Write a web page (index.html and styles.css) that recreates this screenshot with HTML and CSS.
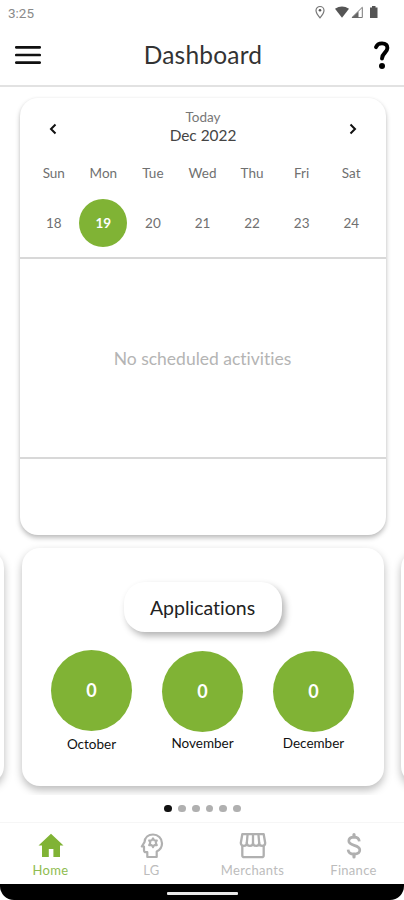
FILE: index.html
```html
<!DOCTYPE html>
<html lang="en">
<head>
<meta charset="utf-8">
<title>Dashboard</title>
<link rel="stylesheet" href="styles.css">
</head>
<body>
<div class="screen">
  <div class="status">
    <span class="clock">3:25</span>
    <svg class="status-icons" width="68" height="16" viewBox="0 0 68 16">
      <path d="M6 12.800C3.400 9.800 2 8 2 5.500a4 4 0 0 1 8 0C10 8 8.600 9.800 6 12.800z" fill="none" stroke="#777" stroke-width="1.200"/>
      <circle cx="6" cy="5.300" r="1.300" fill="#555"/>
      <path d="M21 3.700Q28-.9 35 3.700L28 12.800z" fill="#555"/>
      <path d="M48.300 2.300V12.500H38z" fill="none" stroke="#777" stroke-width="1"/>
      <path d="M44.500 6.500V13H37.500z" fill="#666"/>
      <path d="M56 2.500h2V1h3.500v1.500h2V13H56z" fill="#555"/>
    </svg>
  </div>
  <header class="appbar">
    <svg class="menu" width="26" height="20" viewBox="0 0 26 20"><path d="M1.300 2.300h23.400M1.300 10h23.400M1.300 17.600h23.400" stroke="#111" stroke-width="2.700" stroke-linecap="round"/></svg>
    <h1>Dashboard</h1>
    <svg class="help" width="18" height="30" viewBox="0 0 18 30"><path d="M3 7.200C4 4.300 6 3.400 9 3.400c3.400 0 5.400 1.600 5.400 4.600 0 4.700-5.400 4.900-5.400 10.500" fill="none" stroke="#000" stroke-width="3.900" stroke-linecap="round"/><circle cx="9" cy="26" r="3"/></svg>
  </header>
  <main>
    <section class="calendar">
      <div class="cal-head">
        <svg width="12" height="14" viewBox="0 0 12 14"><path d="M8.500 2.500L4 7l4.500 4.500" fill="none" stroke="#111" stroke-width="2"/></svg>
        <div class="cal-title"><span class="today">Today</span><span class="month">Dec 2022</span></div>
        <svg width="12" height="14" viewBox="0 0 12 14"><path d="M3.500 2.500L8 7l-4.500 4.500" fill="none" stroke="#111" stroke-width="2"/></svg>
      </div>
      <div class="week names"><span>Sun</span><span>Mon</span><span>Tue</span><span>Wed</span><span>Thu</span><span>Fri</span><span>Sat</span></div>
      <div class="week dates"><span>18</span><span class="selected">19</span><span>20</span><span>21</span><span>22</span><span>23</span><span>24</span></div>
      <div class="agenda">No scheduled activities</div>
    </section>
    <section class="carousel">
      <div class="slide side"></div>
      <div class="slide current">
        <div class="pill">Applications</div>
        <div class="stats">
          <div class="stat first"><b>0</b><span>October</span></div>
          <div class="stat"><b>0</b><span>November</span></div>
          <div class="stat"><b>0</b><span>December</span></div>
        </div>
      </div>
      <div class="slide side next"></div>
    </section>
    <div class="dots"><i class="on"></i><i></i><i></i><i></i><i></i><i></i></div>
  </main>
  <nav class="tabs">
    <a class="active"><svg width="28" height="28" viewBox="0 0 28 28"><path d="M14 1.800L1.500 13.600H5V25h6.800v-8h4.600v8H23V13.600h3.500z" fill="currentColor"/></svg><span>Home</span></a>
    <a><svg width="28" height="28" viewBox="0 0 28 28" fill="none" stroke="currentColor" stroke-width="2.200" stroke-linejoin="round"><path d="M9.300 25v-4.800H8a2 2 0 0 1-2-2v-3.700H3.800l2.700-4.300C6.800 5.500 10.400 2.500 15 2.500c5 0 9 3.700 9 8.700 0 3.700-2.100 6.700-5.300 8.200V25z"/><path d="M15 6.300l1.300 2.200 2.600-.1-1.200 2.400 1.200 2.400-2.600-.1-1.300 2.200-1.300-2.200-2.600.1 1.200-2.400-1.200-2.400 2.600.1z" stroke-width="2"/></svg><span>LG</span></a>
    <a><svg width="28" height="28" viewBox="0 0 28 28" fill="none" stroke="currentColor" stroke-width="2.300" stroke-linejoin="round"><path d="M3.300 2.200h21.400l1.500 8.800c0 1.700-1.300 2.800-3 2.800s-3-1.200-3-2.800c0 1.600-1.400 2.800-3.100 2.800s-3.100-1.200-3.100-2.800c0 1.600-1.400 2.800-3.100 2.800S7.800 12.600 7.800 11c0 1.600-1.300 2.800-3 2.800s-3-1.100-3-2.800z"/><path d="M7.800 11l.8-8.800M14 11V2.200M20.200 11l-.8-8.800"/><path d="M3.300 13.600v9.600a2 2 0 0 0 2 2h17.400a2 2 0 0 0 2-2v-9.600"/></svg><span>Merchants</span></a>
    <a><svg width="28" height="28" viewBox="0 0 28 28" fill="none" stroke="currentColor" stroke-width="2.700"><path d="M19.300 9.300c-.3-2.700-2.200-4.200-5.300-4.200-3.300 0-5.200 1.600-5.200 4 0 5.600 11 3 11 9 0 2.600-2.200 4.100-5.800 4.100-3.500 0-5.700-1.700-5.900-4.500"/><path d="M14 5V2.500M14 22v3" stroke-width="3.200" stroke-linecap="round"/></svg><span>Finance</span></a>
  </nav>
  <div class="gesture"><i></i></div>
</div>
</body>
</html>
```
FILE: styles.css
```css
* { box-sizing: border-box; }
body { margin: 0; background: #fff; font-family: Lato, "Liberation Sans", sans-serif; font-variant-ligatures: none; color: #222; }
.screen { width: 404px; height: 900px; overflow: hidden; display: flex; flex-direction: column; }
.status { height: 26px; padding: 5px 22px 0 8px; display: flex; justify-content: space-between; }
.clock { font: 13.5px/17px Roboto, sans-serif; color: #8a8a8a; }
.status-icons { display: block; }
.appbar { height: 61px; padding: 0 13px 0 15px; border-bottom: 2px solid #e2e2e2; display: grid; grid-template-columns: 26px 1fr 18px; align-items: center; }
.appbar h1 { margin: -1px 0 0; font-size: 24.5px; font-weight: 400; line-height: 30px; letter-spacing: .2px; text-align: center; padding-right: 8px; color: #333; }
.appbar svg { display: block; }
.menu { margin-top: -1px; }
.help { margin-top: -2px; }
main { height: 735px; padding-top: 11px; display: flex; flex-direction: column; }
.calendar { height: 437px; flex: none; margin: 0 18px 0 20px; border-radius: 18px; background: #fff; box-shadow: 0 3px 5px rgba(0,0,0,.25), 0 0 3px rgba(0,0,0,.05); }
.cal-head { display: flex; justify-content: space-between; padding: 12px 27px 0 27px; height: 51px; }
.cal-head svg { margin-top: 12px; }
.cal-title { display: flex; flex-direction: column; align-items: center; line-height: 17px; }
.today { font-size: 13.5px; color: #777; line-height: 15px; }
.month { font-size: 15.4px; line-height: 20px; color: #444; }
.week { display: grid; grid-template-columns: repeat(7, 1fr); padding: 0 10px 0 9px; justify-items: center; align-items: center; font-size: 13.5px; color: #707070; }
.names { height: 48px; }
.dates { height: 60px; padding-bottom: 8px; }
.selected { width: 48px; height: 48px; border-radius: 50%; background: #80b335; color: #fff; display: flex; align-items: center; justify-content: center; font-weight: 700; }
.agenda { height: 202px; border: solid #d8d8d8; border-width: 2px 0; display: flex; align-items: center; justify-content: center; font-size: 17.5px; color: #b4b4b4; padding-right: 1px; }
.carousel { height: 260px; flex: none; display: flex; justify-content: center; align-items: flex-start; gap: 17px; padding-top: 13px; overflow: hidden; }
.slide { flex: none; width: 362px; height: 238px; border-radius: 18px; background: #fff; box-shadow: 0 4px 9px rgba(0,0,0,.27); position: relative; }
.side { height: 234px; margin-top: 2px; }
.next { left: 1px; }
.current { padding-top: 34px; left: 1px; display: flex; flex-direction: column; align-items: center; }
.pill { width: 158px; height: 50px; border-radius: 21px; background: #fff; box-shadow: 3px 4px 7px rgba(0,0,0,.3); font-size: 19.5px; line-height: 51px; text-align: center; margin-right: 1px; color: #222; }
.stats { display: flex; gap: 30px; padding-top: 19px; margin-right: 1px; }
.stat { width: 81px; display: flex; flex-direction: column; align-items: center; font-size: 13.5px; line-height: 17px; color: #111; white-space: nowrap; }
.stat b { width: 81px; height: 81px; border-radius: 50%; background: #80b335; color: #fff; font-size: 18px; display: flex; align-items: center; justify-content: center; margin-bottom: 3px; }
.first { margin-top: -1px; }
.first b { margin-bottom: 5px; }
.dots { display: flex; justify-content: center; align-items: center; gap: 6px; height: 28px; padding-left: 1px; }
.dots i { width: 7.8px; height: 7.8px; border-radius: 50%; background: #b0b0b0; }
.dots .on { background: #111; }
.tabs { height: 62px; border-top: 1px solid #f6f6f6; display: grid; grid-template-columns: repeat(4, 101px); padding-top: 9px; }
.tabs a { display: flex; flex-direction: column; align-items: center; color: #b0b0b0; font-size: 13px; line-height: 17px; letter-spacing: .3px; }
.tabs svg { display: block; margin-bottom: 2px; }
.tabs span { color: #bcbcbc; }
.tabs .active { color: #80b335; }
.tabs .active span { color: #8fbc50; }
.gesture { height: 16px; background: #000; border-radius: 0 0 14px 14px; display: flex; justify-content: center; padding-top: 8px; }
.gesture i { width: 71px; height: 3px; border-radius: 1px; background: #e8e8e8; }
```
